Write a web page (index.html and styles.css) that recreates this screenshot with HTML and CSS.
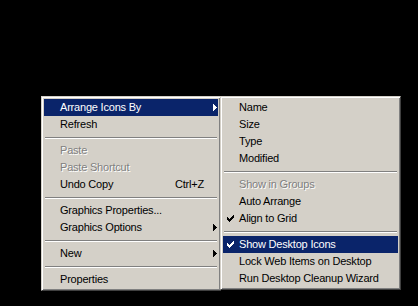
FILE: index.html
```html
<!DOCTYPE html>
<html>
<head>
<meta charset="utf-8">
<link rel="stylesheet" href="styles.css">
</head>
<body>
<div class="desktop">
  <div class="menus">
    <div class="menu main">
      <div class="item active"><span class="label">Arrange Icons By</span><span class="arrow"><svg width="4" height="7" viewBox="0 0 4 7"><path d="M0 0h1v7H0zM1 1h1v5H1zM2 2h1v3H2zM3 3h1v1H3z"/></svg></span></div>
      <div class="item"><span class="label">Refresh</span><span class="arrow"></span></div>
      <div class="sep"></div>
      <div class="item disabled"><span class="label">Paste</span><span class="arrow"></span></div>
      <div class="item disabled"><span class="label">Paste Shortcut</span><span class="arrow"></span></div>
      <div class="item"><span class="label">Undo Copy</span><span class="shortcut">Ctrl+Z</span><span class="arrow"></span></div>
      <div class="sep"></div>
      <div class="item"><span class="label">Graphics Properties...</span><span class="arrow"></span></div>
      <div class="item"><span class="label">Graphics Options</span><span class="arrow"><svg width="4" height="7" viewBox="0 0 4 7"><path d="M0 0h1v7H0zM1 1h1v5H1zM2 2h1v3H2zM3 3h1v1H3z"/></svg></span></div>
      <div class="sep"></div>
      <div class="item"><span class="label">New</span><span class="arrow"><svg width="4" height="7" viewBox="0 0 4 7"><path d="M0 0h1v7H0zM1 1h1v5H1zM2 2h1v3H2zM3 3h1v1H3z"/></svg></span></div>
      <div class="sep"></div>
      <div class="item"><span class="label">Properties</span><span class="arrow"></span></div>
    </div>
    <div class="menu sub">
      <div class="item"><span class="check"></span><span class="label">Name</span></div>
      <div class="item"><span class="check"></span><span class="label">Size</span></div>
      <div class="item"><span class="check"></span><span class="label">Type</span></div>
      <div class="item"><span class="check"></span><span class="label">Modified</span></div>
      <div class="sep"></div>
      <div class="item disabled"><span class="check"></span><span class="label">Show in Groups</span></div>
      <div class="item"><span class="check"></span><span class="label">Auto Arrange</span></div>
      <div class="item"><span class="check"><svg width="7" height="7" viewBox="0 0 7 7"><path d="M0 2h1v3H0zM1 3h1v3H1zM2 4h1v3H2zM3 3h1v3H3zM4 2h1v3H4zM5 1h1v3H5zM6 0h1v3H6z"/></svg></span><span class="label">Align to Grid</span></div>
      <div class="sep"></div>
      <div class="item active"><span class="check"><svg width="7" height="7" viewBox="0 0 7 7"><path d="M0 2h1v3H0zM1 3h1v3H1zM2 4h1v3H2zM3 3h1v3H3zM4 2h1v3H4zM5 1h1v3H5zM6 0h1v3H6z"/></svg></span><span class="label">Show Desktop Icons</span></div>
      <div class="item"><span class="check"></span><span class="label">Lock Web Items on Desktop</span></div>
      <div class="item"><span class="check"></span><span class="label">Run Desktop Cleanup Wizard</span></div>
    </div>
  </div>
</div>
</body>
</html>
```
FILE: styles.css
```css
html, body {
  margin: 0;
  padding: 0;
  background: #000;
}
.desktop {
  width: 418px;
  height: 306px;
  background: #000;
  padding: 96px 0 0 41px;
  box-sizing: border-box;
  font-family: "Liberation Sans", Arial, sans-serif;
  font-size: 11px;
  letter-spacing: -0.2px;
  color: #000;
}
.menus {
  display: flex;
  align-items: flex-start;
}
.menu {
  background: #d4d0c8;
  border-style: solid;
  border-width: 1px;
  border-color: #d4d0c8 #404040 #404040 #d4d0c8;
  box-shadow: inset 1px 1px 0 #fff, inset -1px -1px 0 #808080;
  padding: 2px;
  box-sizing: border-box;
}
.main {
  width: 180px;
}
.sub {
  width: 181px;
  margin-left: -1px;
  position: relative;
}
.item {
  display: flex;
  align-items: center;
  height: 17px;
  line-height: 17px;
  white-space: nowrap;
}
.main .item {
  padding-left: 16px;
}
.label {
  flex: 1;
}
.arrow {
  width: 14px;
  height: 17px;
  display: flex;
  align-items: center;
  justify-content: flex-end;
  padding-right: 1px;
  box-sizing: border-box;
}
.arrow svg {
  display: block;
  fill: #000;
}
.check {
  width: 16px;
  height: 17px;
  display: flex;
  align-items: center;
  padding-left: 4px;
  box-sizing: border-box;
}
.check svg {
  display: block;
  fill: #000;
}
.item.active {
  background: #0a246a;
  color: #fff;
}
.item.active svg {
  fill: #fff;
}
.item.disabled {
  color: #808080;
  text-shadow: 1px 1px 0 #fff;
}
.sep {
  height: 9px;
  display: flex;
  flex-direction: column;
  justify-content: center;
  padding: 0 1px;
}
.sep::before {
  content: "";
  display: block;
  height: 1px;
  background: #808080;
  border-bottom: 1px solid #fff;
}
```
